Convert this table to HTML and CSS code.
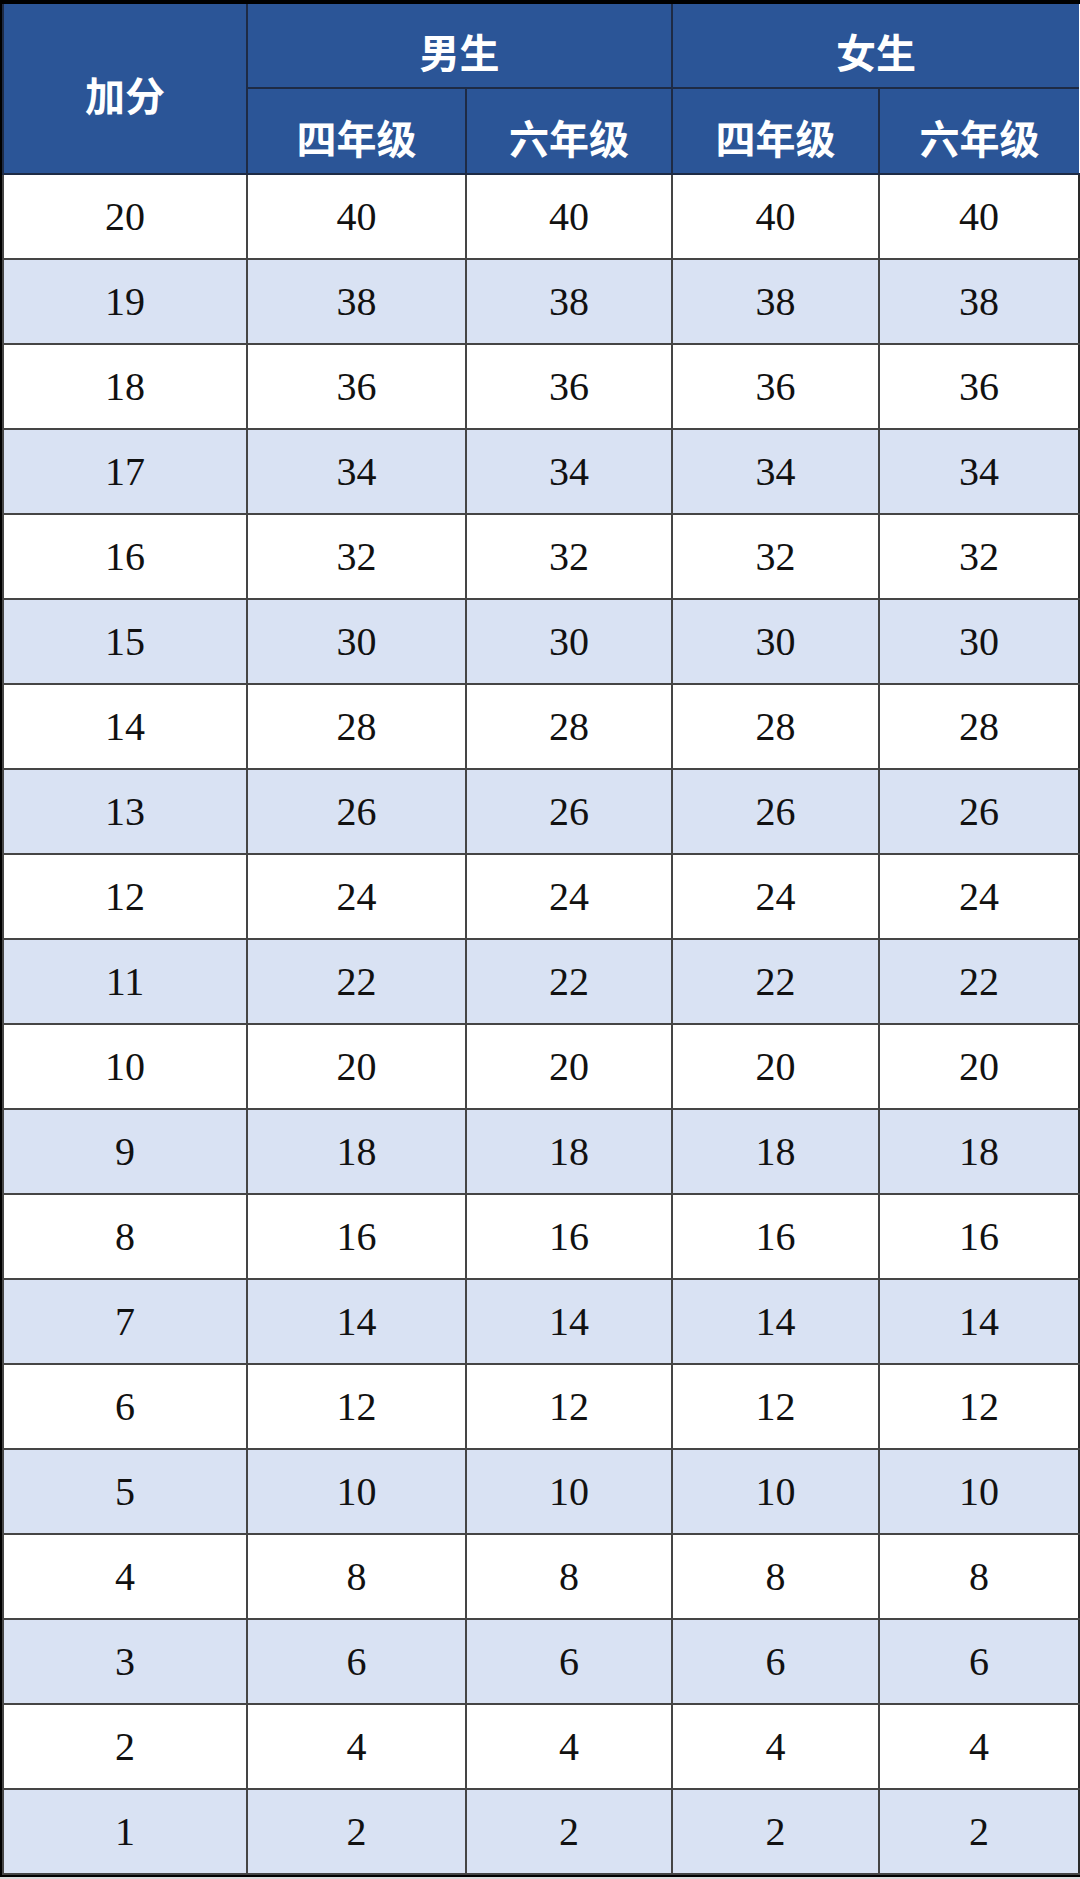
FILE: index.html
```html
<!DOCTYPE html>
<html lang="zh">
<head>
<meta charset="utf-8">
<link rel="stylesheet" href="styles.css">
</head>
<body>
<div class="frame">
<table class="score">
<colgroup>
<col class="c1"><col class="c2"><col class="c3"><col class="c4"><col class="c5">
</colgroup>
<thead>
<tr class="h1">
<th rowspan="2">加分</th>
<th colspan="2">男生</th>
<th colspan="2">女生</th>
</tr>
<tr class="h2">
<th>四年级</th><th>六年级</th><th>四年级</th><th>六年级</th>
</tr>
</thead>
<tbody>
<tr><td>20</td><td>40</td><td>40</td><td>40</td><td>40</td></tr>
<tr class="alt"><td>19</td><td>38</td><td>38</td><td>38</td><td>38</td></tr>
<tr><td>18</td><td>36</td><td>36</td><td>36</td><td>36</td></tr>
<tr class="alt"><td>17</td><td>34</td><td>34</td><td>34</td><td>34</td></tr>
<tr><td>16</td><td>32</td><td>32</td><td>32</td><td>32</td></tr>
<tr class="alt"><td>15</td><td>30</td><td>30</td><td>30</td><td>30</td></tr>
<tr><td>14</td><td>28</td><td>28</td><td>28</td><td>28</td></tr>
<tr class="alt"><td>13</td><td>26</td><td>26</td><td>26</td><td>26</td></tr>
<tr><td>12</td><td>24</td><td>24</td><td>24</td><td>24</td></tr>
<tr class="alt"><td>11</td><td>22</td><td>22</td><td>22</td><td>22</td></tr>
<tr><td>10</td><td>20</td><td>20</td><td>20</td><td>20</td></tr>
<tr class="alt"><td>9</td><td>18</td><td>18</td><td>18</td><td>18</td></tr>
<tr><td>8</td><td>16</td><td>16</td><td>16</td><td>16</td></tr>
<tr class="alt"><td>7</td><td>14</td><td>14</td><td>14</td><td>14</td></tr>
<tr><td>6</td><td>12</td><td>12</td><td>12</td><td>12</td></tr>
<tr class="alt"><td>5</td><td>10</td><td>10</td><td>10</td><td>10</td></tr>
<tr><td>4</td><td>8</td><td>8</td><td>8</td><td>8</td></tr>
<tr class="alt"><td>3</td><td>6</td><td>6</td><td>6</td><td>6</td></tr>
<tr><td>2</td><td>4</td><td>4</td><td>4</td><td>4</td></tr>
<tr class="alt"><td>1</td><td>2</td><td>2</td><td>2</td><td>2</td></tr>
</tbody>
</table>
</div>
</body>
</html>
```
FILE: styles.css
```css
html, body {
  margin: 0;
  padding: 0;
  background: #d8d8d8;
}
.frame {
  width: 1080px;
  height: 1877px;
  box-sizing: border-box;
  background: #000;
  padding: 4px 0 5px 2px;
}
.score {
  width: 1076px;
  height: 1868px;
  border-collapse: collapse;
  table-layout: fixed;
  background: #fff;
}
.c1 { width: 244px; }
.c2 { width: 219px; }
.c3 { width: 206px; }
.c4 { width: 207px; }
.c5 { width: 200px; }
.score th {
  background: #2b5597;
  color: #fff;
  font-family: "Noto Sans CJK SC", "Noto Sans", sans-serif;
  font-weight: 700;
  font-size: 40px;
  line-height: 1;
  padding: 11px 0 0 0;
  border: 2px solid #1e2b45;
  text-align: center;
  vertical-align: middle;
}
.score tr.h1 th { height: 72px; }
.score tr.h2 th { height: 73px; }
.score td {
  font-family: "Liberation Serif", "Times New Roman", serif;
  font-size: 40px;
  color: #111;
  text-align: center;
  vertical-align: middle;
  border: 2px solid #454545;
  padding: 0;
  line-height: 1;
}
.score tbody tr { height: 85px; }
.score tr.alt td { background: #d9e2f3; }
.score thead tr.h1 th { border-top: none; }
.score tr th:last-child { border-right: none; }
.score tr td:last-child { border-right: 2px solid #2a2a2a; }
```
